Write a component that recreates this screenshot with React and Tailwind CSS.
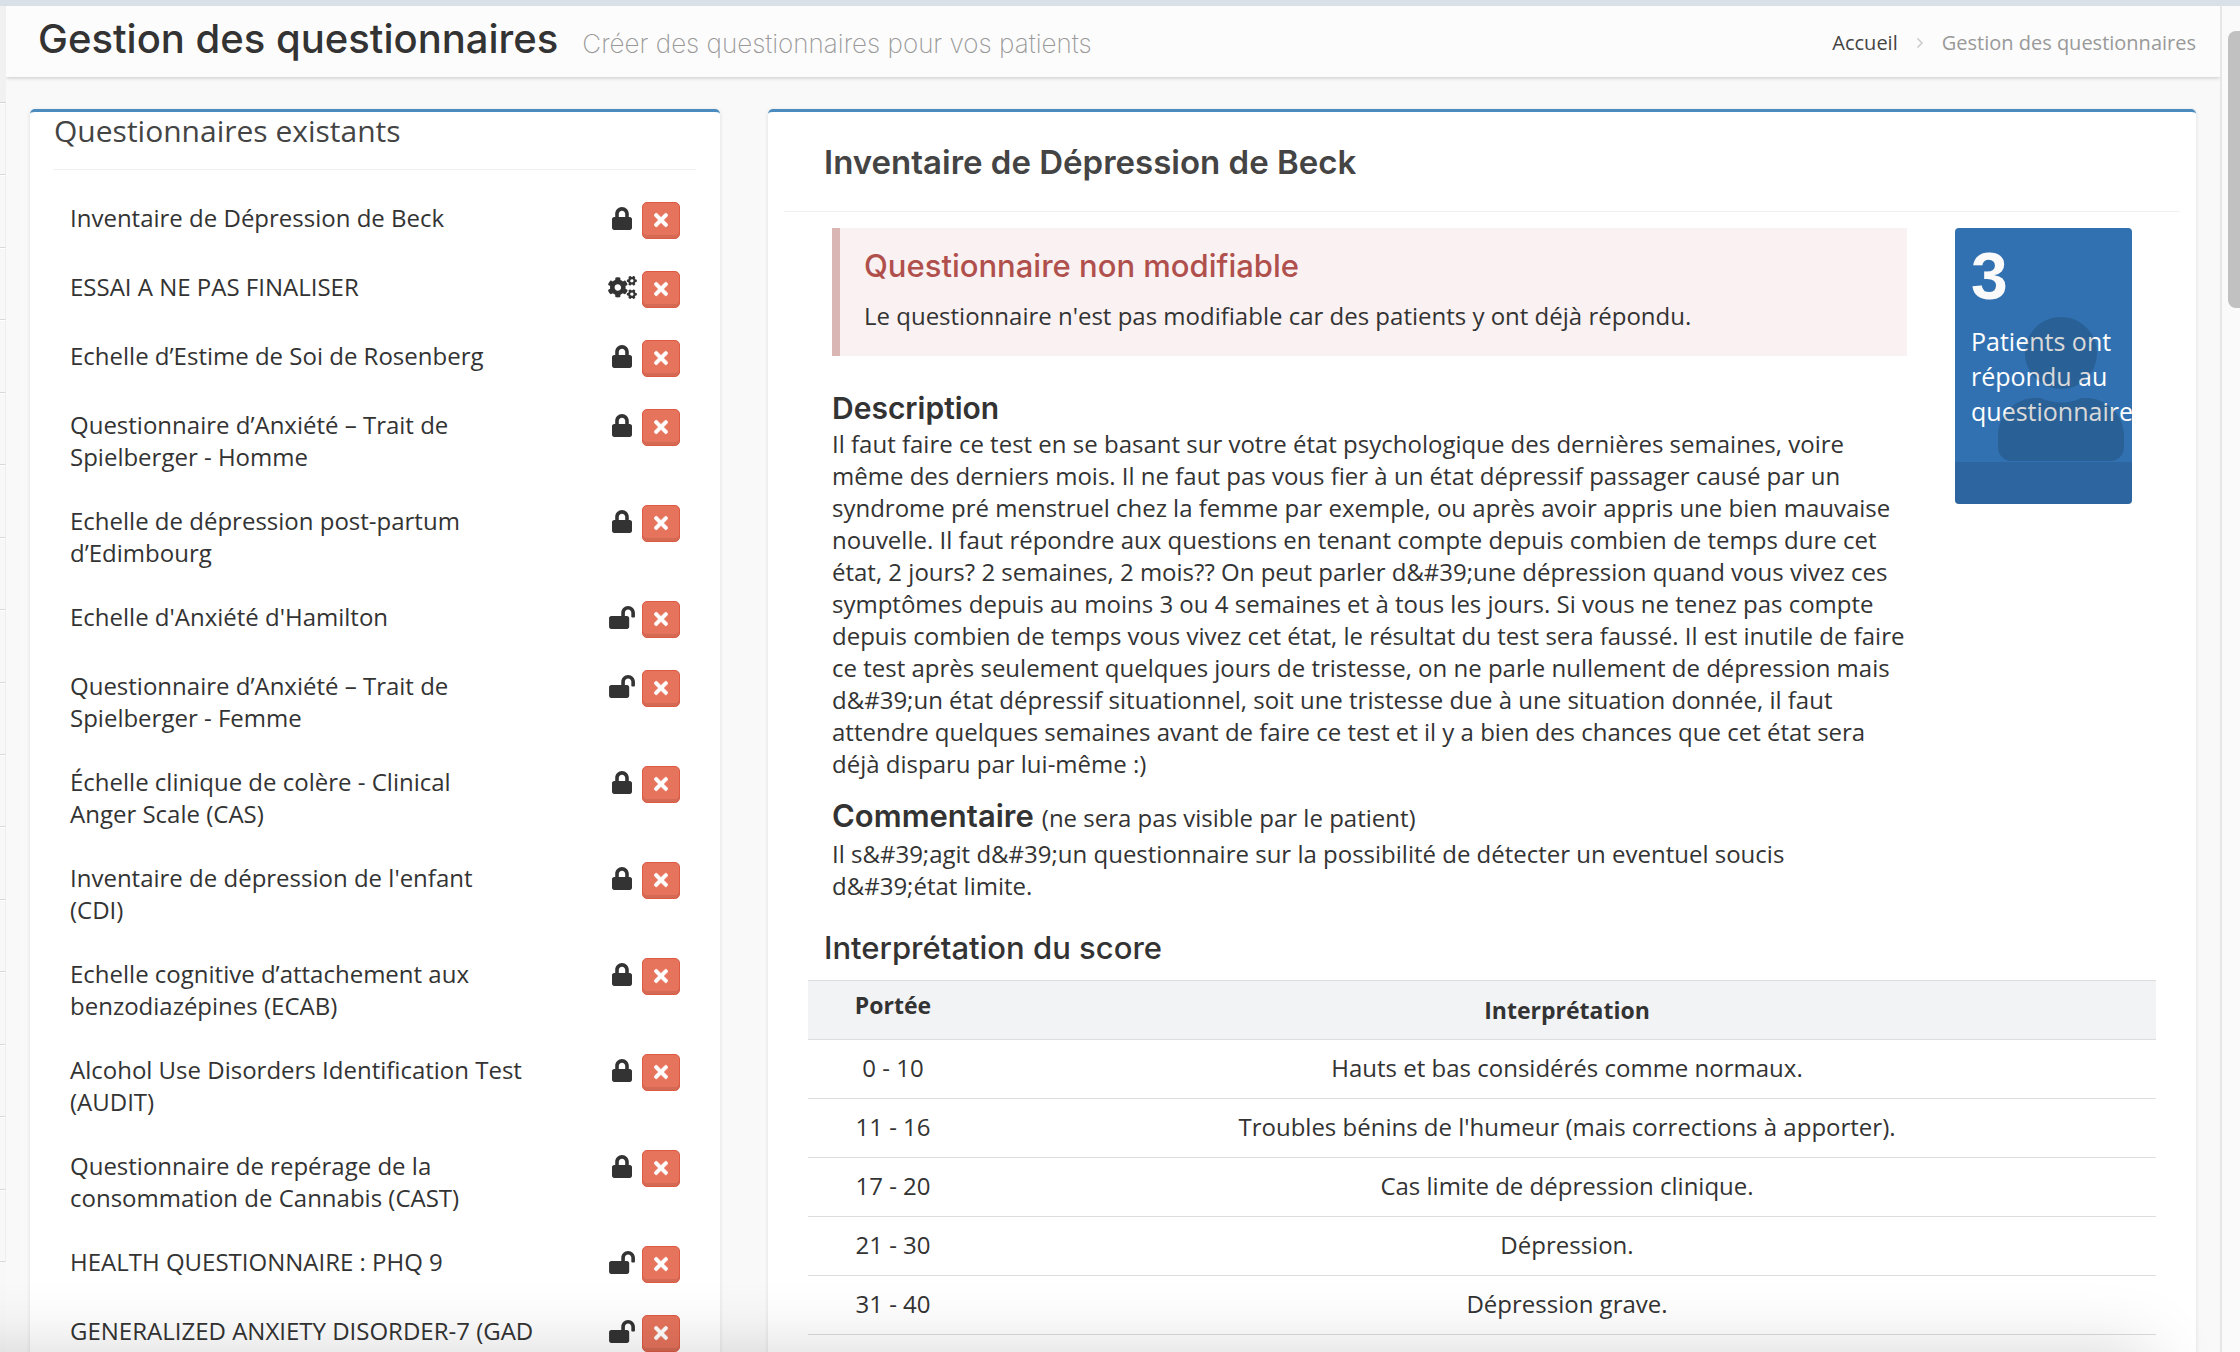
import { FaCogs, FaLock, FaLockOpen, FaTimes, FaUser } from 'react-icons/fa';

const questionnaires = [
  { name: 'Inventaire de Dépression de Beck', state: 'locked' },
  { name: 'ESSAI A NE PAS FINALISER', state: 'draft' },
  { name: 'Echelle d’Estime de Soi de Rosenberg', state: 'locked' },
  { name: 'Questionnaire d’Anxiété – Trait de Spielberger - Homme', state: 'locked' },
  { name: 'Echelle de dépression post-partum d’Edimbourg', state: 'locked' },
  { name: "Echelle d'Anxiété d'Hamilton", state: 'open' },
  { name: 'Questionnaire d’Anxiété – Trait de Spielberger - Femme', state: 'open' },
  { name: 'Échelle clinique de colère - Clinical\nAnger Scale (CAS)', state: 'locked' },
  { name: "Inventaire de dépression de l'enfant\n(CDI)", state: 'locked' },
  { name: 'Echelle cognitive d’attachement aux benzodiazépines (ECAB)', state: 'locked' },
  { name: 'Alcohol Use Disorders Identification Test (AUDIT)', state: 'locked' },
  { name: 'Questionnaire de repérage de la consommation de Cannabis (CAST)', state: 'locked' },
  { name: 'HEALTH QUESTIONNAIRE : PHQ 9', state: 'open' },
  { name: 'GENERALIZED ANXIETY DISORDER-7 (GAD 7)', state: 'open' },
];

const states = {
  locked: { Icon: FaLock, size: 'h-[23px] w-5', label: 'Verrouillé' },
  open: { Icon: FaLockOpen, size: 'h-[23px] w-[26px]', label: 'Modifiable' },
  draft: { Icon: FaCogs, size: 'h-[23px] w-[29px]', label: 'En préparation' },
};

const scores = [
  ['0 - 10', 'Hauts et bas considérés comme normaux.'],
  ['11 - 16', "Troubles bénins de l'humeur (mais corrections à apporter)."],
  ['17 - 20', 'Cas limite de dépression clinique.'],
  ['21 - 30', 'Dépression.'],
  ['31 - 40', 'Dépression grave.'],
];

const description =
  'Il faut faire ce test en se basant sur votre état psychologique des dernières semaines, voire même des derniers mois. Il ne faut pas vous fier à un état dépressif passager causé par un syndrome pré menstruel chez la femme par exemple, ou après avoir appris une bien mauvaise nouvelle. Il faut répondre aux questions en tenant compte depuis combien de temps dure cet état, 2 jours? 2 semaines, 2 mois?? On peut parler d&#39;une dépression quand vous vivez ces symptômes depuis au moins 3 ou 4 semaines et à tous les jours. Si vous ne tenez pas compte depuis combien de temps vous vivez cet état, le résultat du test sera faussé. Il est inutile de faire ce test après seulement quelques jours de tristesse, on ne parle nullement de dépression mais d&#39;un état dépressif situationnel, soit une tristesse due à une situation donnée, il faut attendre quelques semaines avant de faire ce test et il y a bien des chances que cet état sera déjà disparu par lui-même :)';

const comment =
  'Il s&#39;agit d&#39;un questionnaire sur la possibilité de détecter un eventuel soucis d&#39;état limite.';

function SidebarEdge() {
  return (
    <div className="flex w-1.5 shrink-0 flex-col bg-[#f8f8f8]">
      <div className="h-[97px] border-b border-[#d5d5d5] bg-[#f1f1f1]" />
      {Array.from({ length: 16 }, (_, i) => (
        <div key={i} className="flex-1 border-r border-b border-t border-r-[#eeeeee] border-b-[#d8d8d8] border-t-white" />
      ))}
      <div className="h-[90px]" />
    </div>
  );
}

function Header() {
  return (
    <header className="relative flex h-[71px] items-start justify-between bg-[#fcfcfc] pt-[9px] pr-6 pl-8 shadow-[0_1px_4px_rgba(0,0,0,0.2)]">
      <h1 className="font-['Inter',sans-serif] text-[40px] leading-[48px] font-medium whitespace-nowrap text-[#333]">
        Gestion des questionnaires
        <small className="ml-6 text-[26px] font-extralight text-[#999]">
          Créer des questionnaires pour vos patients
        </small>
      </h1>
      <nav className="mt-[14px] flex items-center text-[20px] leading-7 whitespace-nowrap">
        <a href="#accueil" className="text-[#444]">Accueil</a>
        <svg className="mx-[18px] h-3 w-2" viewBox="0 0 8 12" fill="none" stroke="#ccc" strokeWidth="1.6">
          <path d="M1.5 1.5 6 6 1.5 10.5" />
        </svg>
        <span className="text-[#999]">Gestion des questionnaires</span>
      </nav>
    </header>
  );
}

function QuestionnaireRow({ name, state }) {
  const { Icon, size, label } = states[state];
  return (
    <li className="flex items-start py-4">
      <a href="#questionnaire" className="mr-auto w-[468px] whitespace-pre-line">{name}</a>
      <span className="flex h-8 w-10 shrink-0 items-center justify-center" title={label}>
        <Icon className={size} />
      </span>
      <button
        type="button"
        aria-label={`Supprimer ${name}`}
        className="flex h-[37px] w-[38px] shrink-0 items-center justify-center rounded-[5px] border border-[#dd5a43] bg-[#e6735c] pb-0.5 text-white shadow-[inset_0_-3px_0_rgba(0,0,0,0.08)]"
      >
        <FaTimes className="h-5 w-[14px]" stroke="currentColor" strokeWidth="12" />
      </button>
    </li>
  );
}

function StatBox() {
  return (
    <div className="relative flex h-[276px] w-[177px] shrink-0 flex-col overflow-hidden rounded bg-[#3171b1] text-white">
      <div className="flex-1 px-4 pt-2">
        <p className="font-['Liberation_Sans',sans-serif] text-[66px] leading-[80px] font-bold text-[#fafafa]">3</p>
        <p className="mt-2 text-[25px] leading-[35px]">Patients ont répondu au questionnaire</p>
      </div>
      <FaUser className="absolute right-2 bottom-[43px] h-36 w-[126px] text-black/15" />
      <div className="h-[42px] bg-black/10" />
    </div>
  );
}

function ScoreTable() {
  return (
    <table className="w-full border-collapse text-center">
      <thead>
        <tr className="h-[59px] border-y border-[#ddd] bg-[#f2f3f5] text-[23px]">
          <th className="w-[170px] pt-2 align-top font-bold">Portée</th>
          <th className="align-middle font-bold">Interprétation</th>
        </tr>
      </thead>
      <tbody>
        {scores.map(([range, label]) => (
          <tr key={range} className="border-b border-[#ddd]">
            <td className="pt-3 pb-[14px]">{range}</td>
            <td className="pt-3 pb-[14px]">{label}</td>
          </tr>
        ))}
      </tbody>
    </table>
  );
}

export default function App() {
  return (
    <div className="flex h-screen flex-col overflow-hidden bg-[#f9f9f9] font-['Open_Sans',sans-serif] text-[24px] leading-8 text-[#333]">
      <div className="h-1.5 shrink-0 bg-[#d9e0e8]" />
      <div className="flex min-h-0 flex-1">
        <SidebarEdge />
        <div className="min-w-0 flex-1 overflow-hidden">
          <Header />
          <main className="grid grid-cols-12 pt-8">
            <section className="col-span-4 px-6">
              <div className="min-h-screen rounded-[5px] border-t-[3px] border-[#4b8bbd] bg-white px-6 shadow-[0_1px_4px_rgba(0,0,0,0.12)]">
                <h2 className="border-b border-[#eee] pb-[19px] text-[30px] leading-[38px] text-[#444]">
                  Questionnaires existants
                </h2>
                <ul className="mt-4 px-4">
                  {questionnaires.map((q) => (
                    <QuestionnaireRow key={q.name} {...q} />
                  ))}
                </ul>
              </div>
            </section>
            <section className="col-span-8 px-6">
              <div className="min-h-screen rounded-[5px] border-t-[3px] border-[#4b8bbd] bg-white pt-7 shadow-[0_1px_4px_rgba(0,0,0,0.12)]">
                <h2 className="mx-4 border-b border-[#f0f0f0] pb-[27px] pl-10 font-['Inter',sans-serif] text-[33px] leading-[44px] font-semibold text-[#444]">
                  Inventaire de Dépression de Beck
                </h2>
                <div className="mt-4 flex items-start gap-12 px-16">
                  <div className="min-w-0 flex-1">
                    <div className="border-l-8 border-[#d9b5b4] bg-[#faf1f2] pt-5 pb-6 pl-6">
                      <h3 className="font-['Inter',sans-serif] text-[31px] leading-9 font-medium text-[#b0504c]">
                        Questionnaire non modifiable
                      </h3>
                      <p className="mt-4">
                        Le questionnaire n'est pas modifiable car des patients y ont déjà répondu.
                      </p>
                    </div>
                    <h3 className="mt-8 font-['Inter',sans-serif] text-[30px] leading-10 font-semibold">Description</h3>
                    <p>{description}</p>
                    <div className="mt-4 flex items-baseline gap-2 leading-10">
                      <h3 className="font-['Inter',sans-serif] text-[31px] font-semibold">Commentaire</h3>
                      <span>(ne sera pas visible par le patient)</span>
                    </div>
                    <p>{comment}</p>
                  </div>
                  <StatBox />
                </div>
                <h3 className="mt-[26px] pl-14 font-['Inter',sans-serif] text-[31px] leading-10 font-medium">
                  Interprétation du score
                </h3>
                <div className="mx-10 mt-3">
                  <ScoreTable />
                </div>
              </div>
            </section>
          </main>
        </div>
        <div className="w-5 shrink-0 border-l-2 border-[#e6e6e6] bg-[#fafafa] pt-[25px] pl-1.5">
          <div className="h-[277px] rounded-l-lg bg-[#c1c1c1]" />
        </div>
      </div>
      <div className="pointer-events-none fixed right-[90px] -bottom-[100px] -left-[90px] h-[100px] shadow-[0_0_70px_rgba(0,0,0,0.17)]" />
    </div>
  );
}
